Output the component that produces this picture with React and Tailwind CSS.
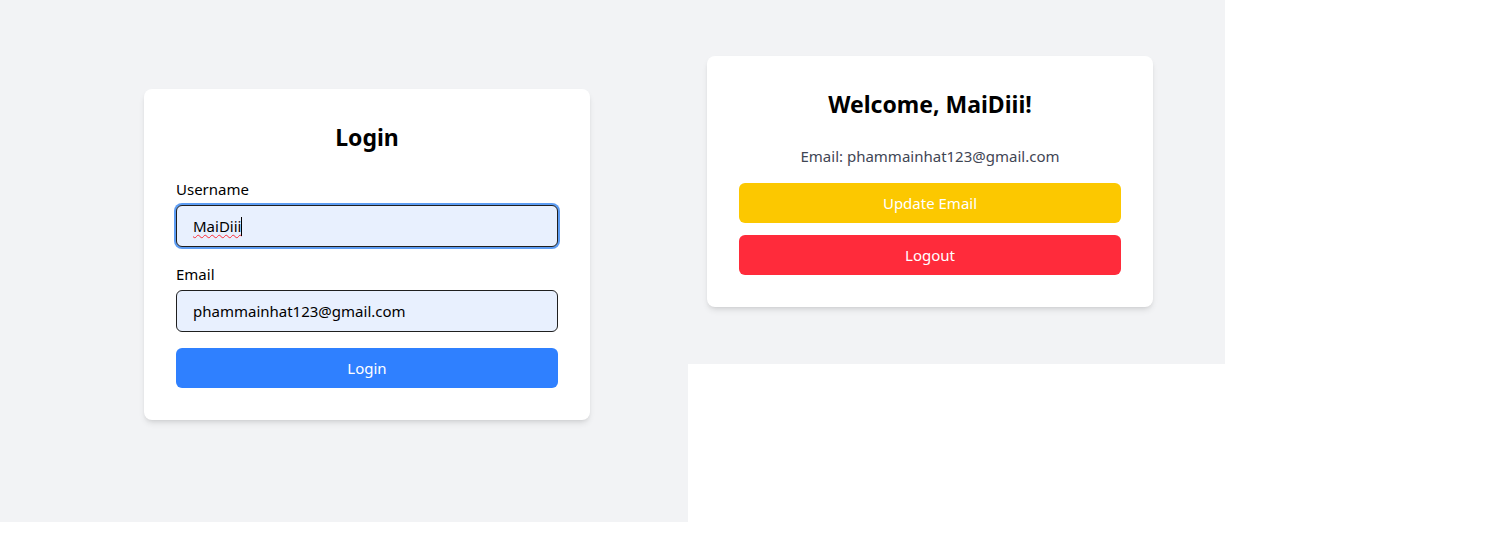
import React from "react";

function Field({ label, value, focused, className = "" }) {
  return (
    <div className={className}>
      <label className="block mb-1 text-[15px] leading-6 text-black">{label}</label>
      <div
        className={`flex items-center h-[42px] px-4 rounded-md border border-[#1f1f1f] bg-[#e8f0fe] text-black text-[15px] ${
          focused ? "ring-2 ring-[#5d9cf2]" : ""
        }`}
      >
        {focused ? (
          <>
            <span className="underline decoration-wavy decoration-red-500 decoration-1 underline-offset-2">
              {value}
            </span>
            <span className="w-px h-[19px] bg-black" />
          </>
        ) : (
          <span>{value}</span>
        )}
      </div>
    </div>
  );
}

function LoginCard() {
  return (
    <div className="w-[446px] bg-white rounded-lg shadow-md p-8">
      <h2 className="text-[23px] leading-8 font-bold text-center text-black mb-6">Login</h2>
      <Field label="Username" value="MaiDiii" focused className="mb-[15px]" />
      <Field label="Email" value="phammainhat123@gmail.com" />
      <button className="mt-4 w-full h-10 rounded-md bg-[#2f80ff] text-white text-[15px]">
        Login
      </button>
    </div>
  );
}

function WelcomeCard() {
  return (
    <div className="w-[446px] bg-white rounded-lg shadow-md p-8">
      <h2 className="text-[23px] leading-8 font-bold text-center text-black mb-6">
        Welcome, MaiDiii!
      </h2>
      <p className="text-center text-[15px] leading-6 text-[#3f4654] mb-[15px]">
        Email: phammainhat123@gmail.com
      </p>
      <button className="w-full h-10 rounded-md bg-[#fcc800] text-white text-[15px]">
        Update Email
      </button>
      <button className="mt-3 w-full h-10 rounded-md bg-[#ff2b3b] text-white text-[15px]">
        Logout
      </button>
    </div>
  );
}

export default function App() {
  return (
    <div
      className="flex items-start w-[1492px] h-[544px] bg-white"
      style={{ fontFamily: '"Noto Sans", sans-serif' }}
    >
      <div className="w-[688px] h-[522px] bg-[#f2f3f5] pl-[144px] pt-[89px]">
        <LoginCard />
      </div>
      <div className="w-[537px] h-[364px] bg-[#f2f3f5] pl-[19px] pt-[56px]">
        <WelcomeCard />
      </div>
    </div>
  );
}
